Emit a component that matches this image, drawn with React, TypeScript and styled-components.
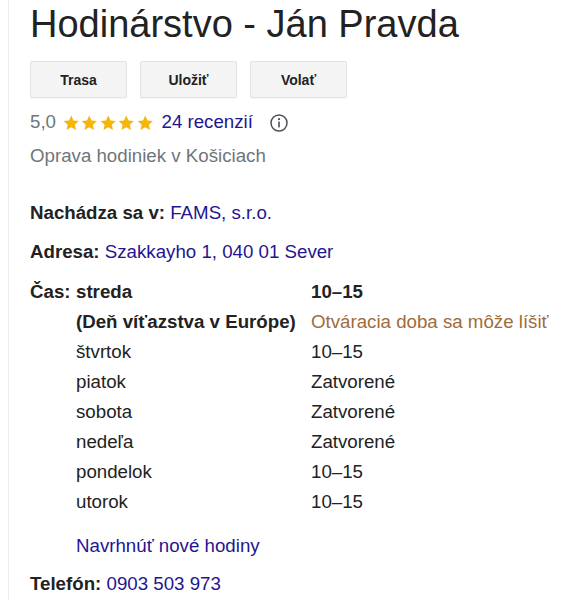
import styled, { createGlobalStyle } from 'styled-components';

const GlobalStyle = createGlobalStyle`
  html, body {
    margin: 0;
    padding: 0;
    background: #fff;
  }
  body {
    font-family: 'Liberation Sans', Arial, sans-serif;
    color: #222;
  }
`;

const Panel = styled.div`
  margin-left: 8px;
  min-height: 600px;
  border-left: 1px solid #ebebeb;
  padding-left: 21px;
  font-size: 18.7px;
  line-height: 28px;
`;

const Title = styled.h1`
  margin: 0;
  font-size: 38px;
  font-weight: 400;
  line-height: 48px;
  color: #222;
`;

const Actions = styled.div`
  display: flex;
  gap: 13px;
  margin-top: 13px;
`;

const ActionButton = styled.button`
  width: 97px;
  height: 37px;
  padding: 0;
  background: #f4f4f4;
  border: 1px solid #e3e3e3;
  border-radius: 2px;
  box-shadow: 0 1px 1px rgba(0, 0, 0, 0.04);
  font-family: 'Liberation Sans', Arial, sans-serif;
  font-size: 14px;
  font-weight: 700;
  color: #222;
`;

const Rating = styled.div`
  display: flex;
  align-items: center;
  margin-top: 10px;
  height: 28px;
  color: #70757a;
`;

const Stars = styled.span`
  display: inline-flex;
  gap: 2px;
  margin: 0 8px 0 7px;
  padding-top: 1px;
`;

const Link = styled.a`
  color: #1f1590;
  text-decoration: none;
  cursor: pointer;
`;

const InfoIcon = styled.svg`
  margin-left: 17px;
  margin-top: 1px;
`;

const Subtitle = styled.div`
  margin-top: 6px;
  color: #70757a;
`;

const Fact = styled.div<{ $gap: number }>`
  margin-top: ${p => p.$gap}px;
`;

const Label = styled.span`
  font-weight: 700;
  color: #222;
`;

const Hours = styled.div`
  display: grid;
  grid-template-columns: 46px 235px auto;
  grid-auto-rows: 30px;
  margin-top: 12px;
  white-space: nowrap;
`;

const Cell = styled.span<{ $bold?: boolean; $warn?: boolean }>`
  font-weight: ${p => (p.$bold ? 700 : 400)};
  color: ${p => (p.$warn ? '#a06c3c' : '#222')};
`;

const Suggest = styled.div`
  margin-top: 14px;
  padding-left: 46px;
`;

function Star() {
  return (
    <svg width="16.5" height="15.5" viewBox="0 0 24 23">
      <path
        d="M12 0.8l3.4 7.3 7.9 0.9-5.9 5.4 1.6 7.8L12 18.2l-7 4 1.6-7.8L0.7 9l7.9-0.9z"
        fill="#f5b50a"
      />
    </svg>
  );
}

const week = [
  ['štvrtok', '10–15'],
  ['piatok', 'Zatvorené'],
  ['sobota', 'Zatvorené'],
  ['nedeľa', 'Zatvorené'],
  ['pondelok', '10–15'],
  ['utorok', '10–15'],
];

export default function App() {
  return (
    <>
      <GlobalStyle />
      <Panel>
        <Title>Hodinárstvo - Ján Pravda</Title>
        <Actions>
          <ActionButton>Trasa</ActionButton>
          <ActionButton>Uložiť</ActionButton>
          <ActionButton>Volať</ActionButton>
        </Actions>
        <Rating>
          <span>5,0</span>
          <Stars>
            {[0, 1, 2, 3, 4].map(i => (
              <Star key={i} />
            ))}
          </Stars>
          <Link>24 recenzií</Link>
          <InfoIcon width="18" height="18" viewBox="0 0 18 18">
            <circle cx="9" cy="9" r="8" fill="none" stroke="#4d5156" strokeWidth="1.5" />
            <circle cx="9" cy="5.2" r="1.1" fill="#4d5156" />
            <rect x="8.2" y="7.6" width="1.6" height="5.8" fill="#4d5156" />
          </InfoIcon>
        </Rating>
        <Subtitle>Oprava hodiniek v Košiciach</Subtitle>

        <Fact $gap={29}>
          <Label>Nachádza sa v:</Label> <Link>FAMS, s.r.o.</Link>
        </Fact>
        <Fact $gap={11}>
          <Label>Adresa:</Label> <Link>Szakkayho 1, 040 01 Sever</Link>
        </Fact>

        <Hours>
          <Cell $bold>Čas:</Cell>
          <Cell $bold>streda</Cell>
          <Cell $bold>10–15</Cell>
          <span />
          <Cell $bold>(Deň víťazstva v Európe)</Cell>
          <Cell $warn>Otváracia doba sa môže líšiť</Cell>
          {week.map(([day, time]) => [
            <span key={day + '-pad'} />,
            <Cell key={day}>{day}</Cell>,
            <Cell key={day + '-time'}>{time}</Cell>,
          ])}
        </Hours>
        <Suggest>
          <Link>Navrhnúť nové hodiny</Link>
        </Suggest>
        <Fact $gap={10}>
          <Label>Telefón:</Label> <Link>0903 503 973</Link>
        </Fact>
      </Panel>
    </>
  );
}
